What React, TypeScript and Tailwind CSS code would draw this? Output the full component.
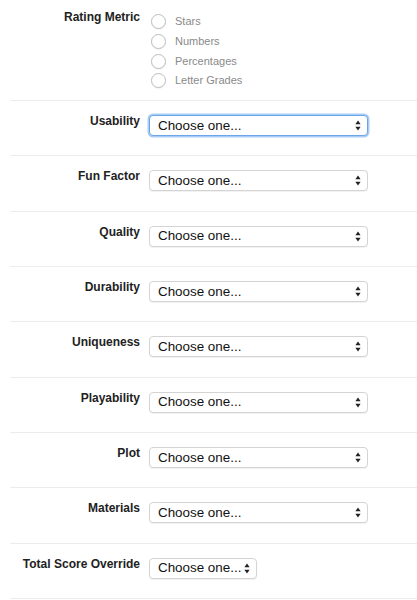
import React from "react";

const font = { fontFamily: '"Liberation Sans", Arial, Helvetica, sans-serif' };

function Arrows() {
  return (
    <svg width="6" height="11" viewBox="0 0 6 11" className="shrink-0">
      <path d="M3 0.5 L5.6 4.3 L0.4 4.3 Z" fill="#222" />
      <path d="M3 10.5 L5.6 6.7 L0.4 6.7 Z" fill="#222" />
    </svg>
  );
}

function FakeSelect({ focused, wide = true }: { focused?: boolean; wide?: boolean }) {
  return (
    <div
      className={
        "flex items-center justify-between h-[21px] rounded-[4px] bg-white pl-[8px] pr-[6px] " +
        (wide ? "w-[219px] " : "w-[108px] ") +
        (focused
          ? "border border-[#6aa6e8] shadow-[0_0_0_1.5px_#a9cdf5]"
          : "border border-[#d4d4d4] shadow-[0_1px_1px_rgba(0,0,0,0.06)]")
      }
    >
      <span className="text-[13.4px] leading-none text-[#111]">Choose one...</span>
      <Arrows />
    </div>
  );
}

function Row({ label, focused, wide }: { label: string; focused?: boolean; wide?: boolean }) {
  return (
    <div className="flex border-b border-[#ececec] h-[55.33px] pt-[14px]">
      <div className="w-[130px] text-right text-[12px] font-bold text-[#222] leading-[13px] whitespace-nowrap">
        {label}
      </div>
      <div className="ml-[9px]">
        <FakeSelect focused={focused} wide={wide} />
      </div>
    </div>
  );
}

export default function App() {
  const options = ["Stars", "Numbers", "Percentages", "Letter Grades"];
  const rows = ["Usability", "Fun Factor", "Quality", "Durability", "Uniqueness", "Playability", "Plot", "Materials"];
  return (
    <div className="w-[417px] h-[600px] bg-white overflow-hidden" style={font}>
      <div className="ml-[10px]">
        <div className="flex border-b border-[#ececec] h-[101px] pt-[10px]">
          <div className="w-[130px] text-right text-[12px] font-bold text-[#222] leading-[14px]">
            Rating Metric
          </div>
          <div className="ml-[11px] flex flex-col pt-[2px]">
            {options.map((o) => (
              <div key={o} className="flex items-center h-[19.7px]">
                <div className="w-[15px] h-[15px] rounded-full border border-[#bdbdbd] bg-white shadow-[0_1px_1px_rgba(0,0,0,0.05)]" />
                <span className="ml-[9px] text-[11px] text-[#8a8a8a] leading-none">{o}</span>
              </div>
            ))}
          </div>
        </div>
        {rows.map((r, i) => (
          <Row key={r} label={r} focused={i === 0} />
        ))}
        <Row label="Total Score Override" wide={false} />
      </div>
    </div>
  );
}
